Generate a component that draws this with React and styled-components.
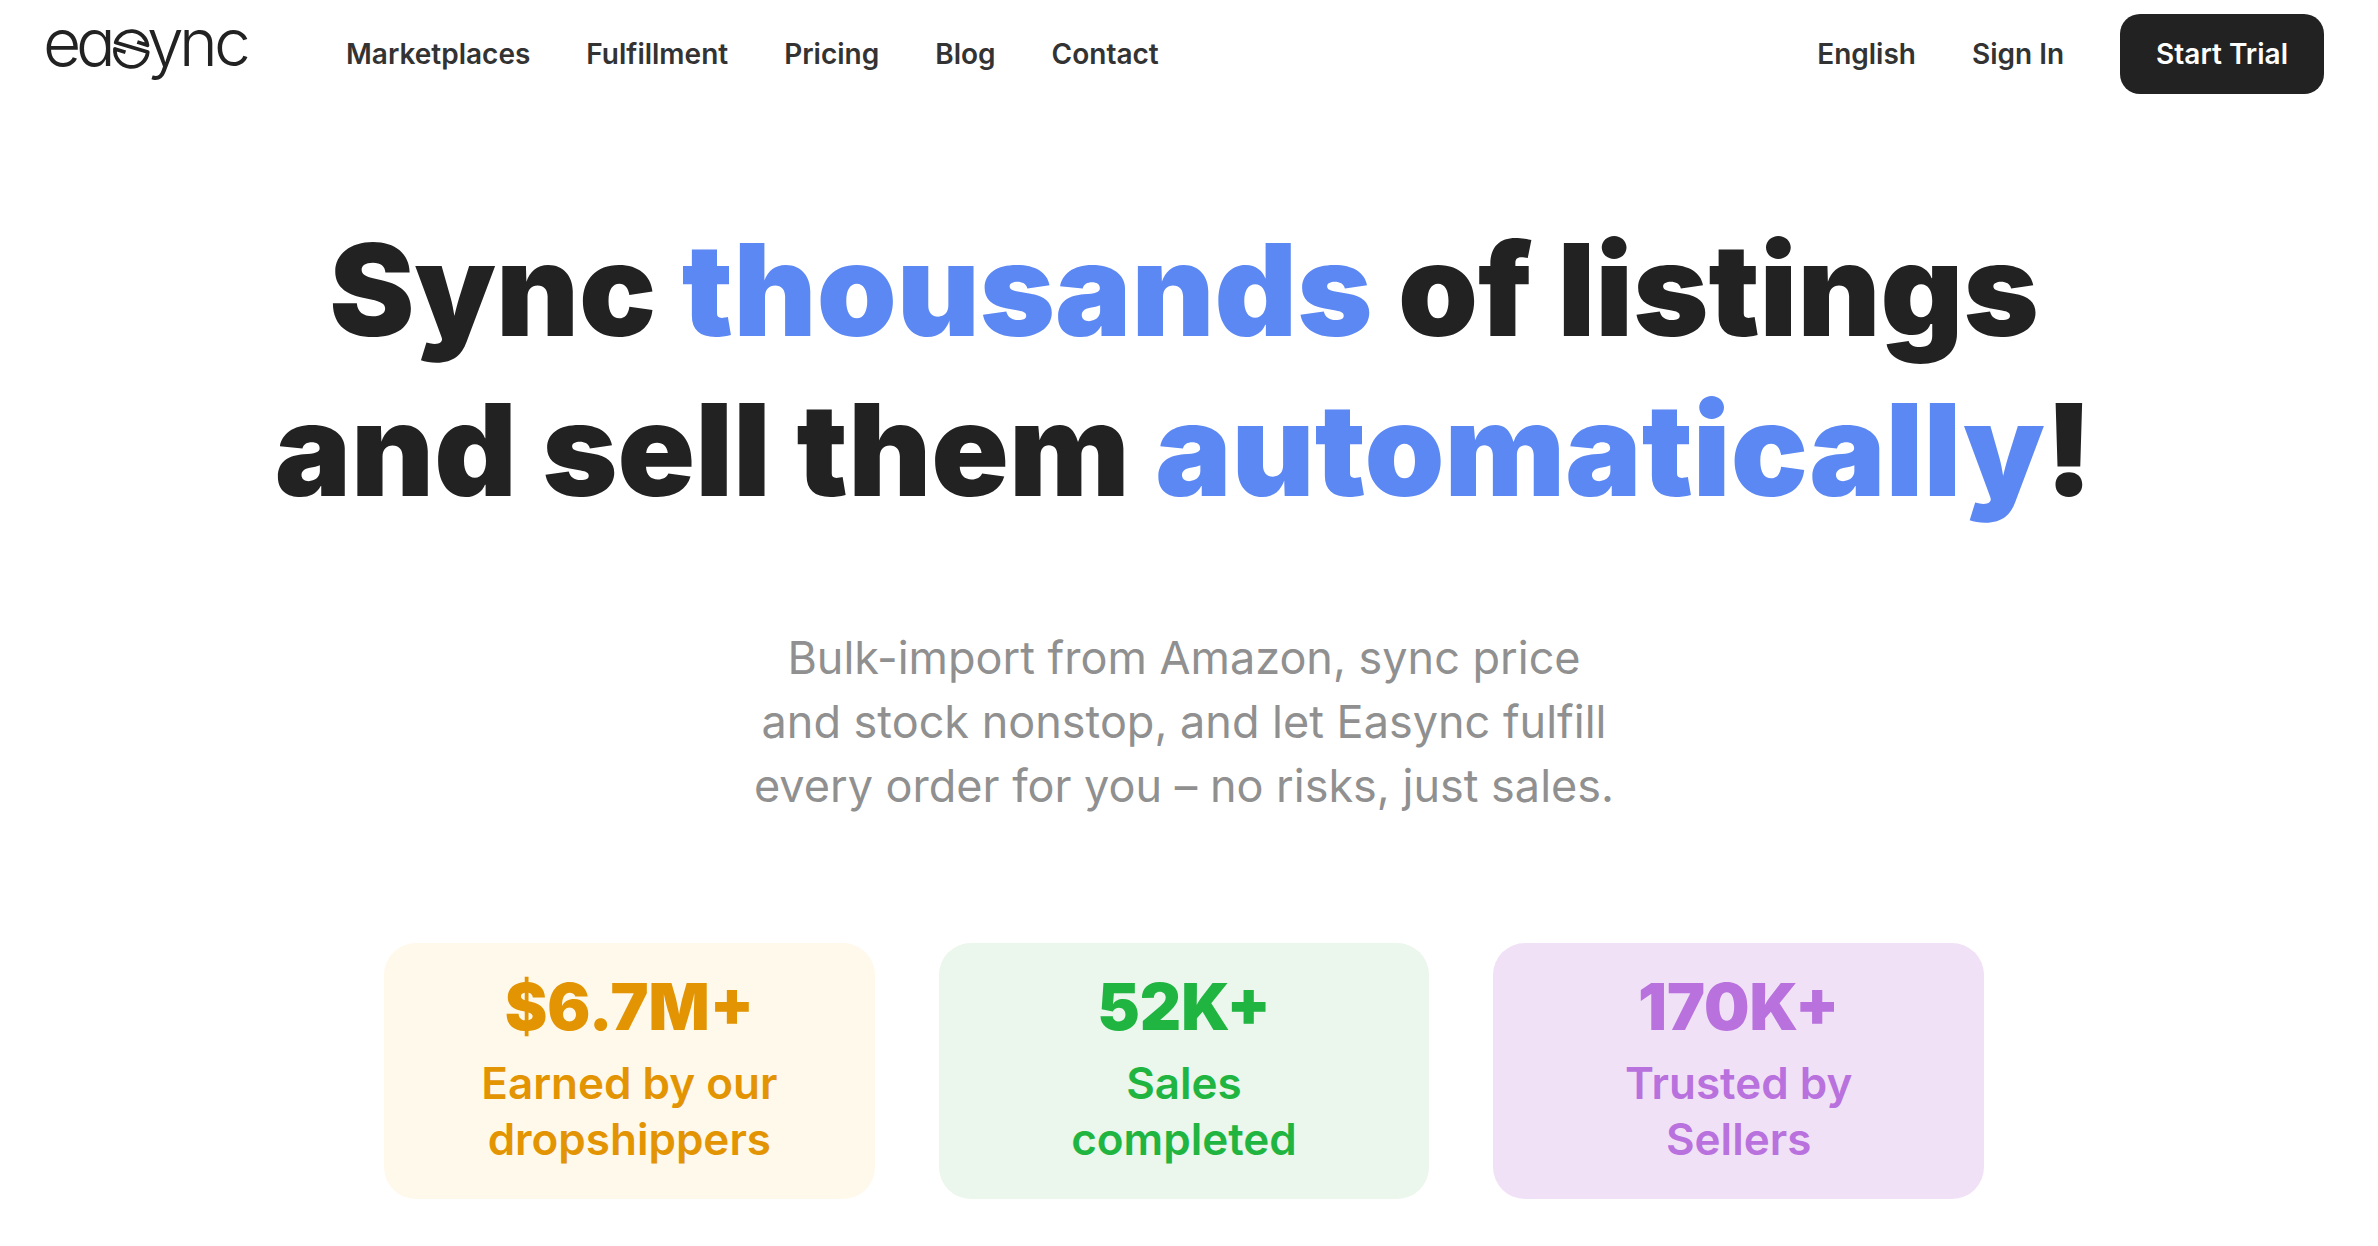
import styled, { createGlobalStyle } from "styled-components";

const GlobalStyle = createGlobalStyle`
  * {
    box-sizing: border-box;
  }
  body {
    margin: 0;
    background-color: #fff;
    color: #222;
    font-family: Inter, "Liberation Sans", sans-serif;
  }
`;

const Page = styled.div`
  padding-right: 10px;
`;

const Header = styled.header`
  display: flex;
  align-items: center;
  padding: 14px 44px;
`;
const LogoLink = styled.a`
  display: flex;
  margin-right: 96px;
  color: #222;
`;
const LogoSvg = styled.svg`
  overflow: visible;
`;
const LogoText = styled.text`
  font-family: Inter, sans-serif;
  font-size: 66px;
  font-weight: 300;
  font-feature-settings: "cv11";
  fill: currentColor;
`;
const Nav = styled.nav`
  display: flex;
  gap: 56px;
`;
const Account = styled.div`
  display: flex;
  align-items: center;
  gap: 56px;
  margin-left: auto;
`;
const NavLink = styled.a`
  color: #333;
  font-size: 28px;
  font-weight: 600;
  line-height: 40px;
  text-decoration: none;
`;
const LangButton = styled.button`
  padding: 0;
  border: none;
  background: none;
  color: #333;
  font-family: inherit;
  font-size: 28px;
  font-weight: 600;
  line-height: 40px;
  cursor: pointer;
`;
const TrialButton = styled(NavLink)`
  padding: 20px 36px;
  border-radius: 20px;
  background-color: #222;
  color: #fff;
`;

const Hero = styled.main`
  display: flex;
  flex-direction: column;
  align-items: center;
  padding: 102px 44px 48px;
  text-align: center;
`;
const Title = styled.h1`
  margin: 0;
  font-size: 128px;
  font-weight: 900;
  line-height: 160px;
`;
const Accent = styled.span`
  color: #5c88f4;
`;
const Subtitle = styled.p`
  margin: 96px 0 0;
  color: #909090;
  font-size: 45px;
  line-height: 64px;
`;
const Stats = styled.div`
  display: grid;
  grid-template-columns: repeat(3, 1fr);
  gap: 64px;
  width: 100%;
  max-width: 1600px;
  margin-top: 125px;
`;
const Stat = styled.section`
  padding: 32px;
  border-radius: 32px;
  background-color: ${(props) => props.$bg};
  color: ${(props) => props.$color};
`;
const StatValue = styled.div`
  margin-bottom: 16px;
  font-size: 64px;
  font-weight: 900;
  line-height: 64px;
`;
const StatLabel = styled.div`
  font-size: 44px;
  font-weight: 600;
  line-height: 56px;
`;

const links = ["Marketplaces", "Fulfillment", "Pricing", "Blog", "Contact"];

const stats = [
  { value: "$6.7M+", label: ["Earned by our", "dropshippers"], color: "#e39402", bg: "#fff9eb" },
  { value: "52K+", label: ["Sales", "completed"], color: "#1fb540", bg: "#ebf6ec" },
  { value: "170K+", label: ["Trusted by", "Sellers"], color: "#b871dd", bg: "#f1e1f7" },
];

function Logo() {
  return (
    <LogoSvg width="206" height="80" viewBox="0 0 206 80" role="img" aria-label="easync">
      <LogoText x="-1 32" y="52">ea</LogoText>
      <path
        d="M93.3 28 L103.4 31.3 A16.3 16.3 0 0 0 71.7 28.5 L103.7 38 A16.3 16.3 0 0 1 71 35 L81.5 38.3"
        fill="none"
        stroke="currentColor"
        strokeWidth="3.8"
        strokeLinejoin="round"
      />
      <LogoText x="103 135 170" y="52">ync</LogoText>
    </LogoSvg>
  );
}

function App() {
  return (
    <>
      <GlobalStyle />
      <Page>
        <Header>
          <LogoLink href="/">
            <Logo />
          </LogoLink>
          <Nav>
            {links.map((link) => (
              <NavLink key={link} href="/">{link}</NavLink>
            ))}
          </Nav>
          <Account>
            <LangButton type="button">English</LangButton>
            <NavLink href="/">Sign In</NavLink>
            <TrialButton href="/">Start Trial</TrialButton>
          </Account>
        </Header>
        <Hero>
          <Title>
            Sync <Accent>thousands</Accent> of listings
            <br />
            and sell them <Accent>automatically</Accent>!
          </Title>
          <Subtitle>
            Bulk-import from Amazon, sync price
            <br />
            and stock nonstop, and let Easync fulfill
            <br />
            every order for you – no risks, just sales.
          </Subtitle>
          <Stats>
            {stats.map((stat) => (
              <Stat key={stat.value} $bg={stat.bg} $color={stat.color}>
                <StatValue>{stat.value}</StatValue>
                <StatLabel>
                  {stat.label[0]}
                  <br />
                  {stat.label[1]}
                </StatLabel>
              </Stat>
            ))}
          </Stats>
        </Hero>
      </Page>
    </>
  );
}

export default App;
